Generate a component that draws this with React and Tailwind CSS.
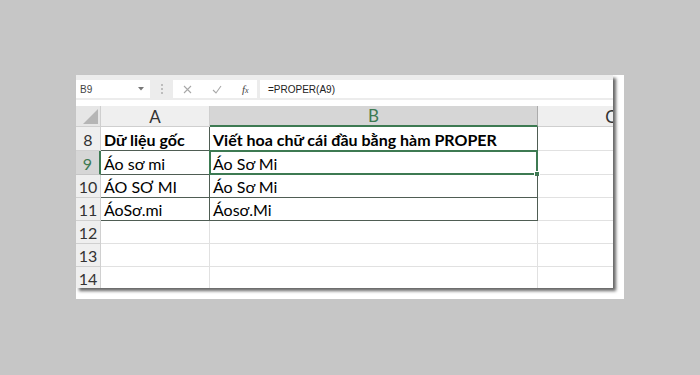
import React from "react";

const rows = [
  { n: 8, h: "h-[24px]", a: "Dữ liệu gốc", b: "Viết hoa chữ cái đầu bằng hàm PROPER", bold: true, inRange: true },
  { n: 9, h: "h-[24px]", a: "Áo sơ mi", b: "Áo Sơ Mi", inRange: true, active: true },
  { n: 10, h: "h-[23px]", a: "ÁO SƠ MI", b: "Áo Sơ Mi", inRange: true },
  { n: 11, h: "h-[23px]", a: "ÁoSơ.mi", b: "Áosơ.Mi", inRange: true },
  { n: 12, h: "h-[23px]" },
  { n: 13, h: "h-[23px]" },
  { n: 14, h: "h-[23px]" },
];

export default function App() {
  return (
    <div className="w-[700px] h-[375px] bg-[#c6c6c6] pt-[75px] pl-[76px] font-['Lato','Open_Sans',sans-serif]">
      <div className="w-[548px] h-[224px] bg-white">
        <div className="w-[537px] h-[213px] overflow-hidden bg-white shadow-[3px_3px_3px_rgba(0,0,0,0.6)]">
          <FormulaBar />
          <div className="h-[6px] bg-white" />
          <HeaderRow />
          {rows.map((row) => <Row key={row.n} row={row} />)}
        </div>
      </div>
    </div>
  );
}

function FormulaBar() {
  return (
    <div className="h-[25px] bg-[#ececec] flex items-start pt-[5px]">
      <div className="w-[74px] h-[18px] bg-white flex items-center justify-between pl-[4px] pr-[6px]">
        <span className="text-[10px] text-[#444] font-['Liberation_Sans',sans-serif]">B9</span>
        <svg width="6" height="4" viewBox="0 0 6 4"><path d="M0 0h6L3 3.5z" fill="#777" /></svg>
      </div>
      <div className="w-[23px] h-[18px] flex flex-col items-center justify-center gap-[2px]">
        <span className="w-[2px] h-[2px] bg-[#bdbdbd]" />
        <span className="w-[2px] h-[2px] bg-[#bdbdbd]" />
        <span className="w-[2px] h-[2px] bg-[#bdbdbd]" />
      </div>
      <div className="w-[84px] h-[18px] bg-white flex items-center pl-[10px] gap-[20px]">
        <svg width="9" height="9" viewBox="0 0 9 9"><path d="M1 1l7 7M8 1l-7 7" stroke="#a8a8a8" strokeWidth="1.1" /></svg>
        <svg width="10" height="9" viewBox="0 0 10 9"><path d="M1 5l3 3 5-7" stroke="#a8a8a8" strokeWidth="1.1" fill="none" /></svg>
        <span className="text-[11px] italic text-[#444] font-['Liberation_Serif',serif] leading-none">f<span className="text-[8px]">x</span></span>
      </div>
      <div className="ml-[3px] flex-1 h-[18px] bg-white flex items-center pl-[8px]">
        <span className="text-[10px] text-[#222] font-['Liberation_Sans',sans-serif]">=PROPER(A9)</span>
      </div>
    </div>
  );
}

function HeaderRow() {
  return (
    <div className="flex h-[21px] text-[17px] leading-none">
      <div className="w-[25px] shrink-0 bg-[#e6e6e6] border-r border-b border-[#cfcfcf] flex items-end justify-end p-[2px]">
        <svg width="15" height="15" viewBox="0 0 15 15"><path d="M15 0V15H0z" fill="#b5b5b5" /></svg>
      </div>
      <div className="w-[109px] shrink-0 bg-[#efefef] border-r border-b border-[#cfcfcf] flex items-center justify-center text-[#333]">A</div>
      <div className="w-[328px] shrink-0 bg-[#d6d6d6] border-r border-[#ababab] border-b-2 border-b-[#3d7a52] flex items-center justify-center text-[#3d7a52]">B</div>
      <div className="w-[146px] shrink-0 bg-[#efefef] border-b border-[#cfcfcf] flex items-center justify-center text-[#333]">C</div>
    </div>
  );
}

function Row({ row }) {
  const text = row.bold ? "font-bold" : "";
  return (
    <div className={`flex ${row.h} text-[16px] leading-none`}>
      <div
        className={
          row.active
            ? "w-[25px] shrink-0 bg-[#d6d6d6] border-r-2 border-r-[#3d7a52] border-b border-b-[#c6c6c6] flex items-end justify-center pb-[2px] text-[#3d7a52]"
            : "w-[25px] shrink-0 bg-[#efefef] border-r border-b border-[#d0d0d0] flex items-end justify-center pb-[2px] text-[#333]"
        }
      >
        {row.n}
      </div>
      <div
        className={
          row.inRange
            ? `w-[109px] shrink-0 border-r border-b border-[#4f5d54] flex items-end pl-[3px] pb-[2px] text-black ${text}`
            : "w-[109px] shrink-0 border-r border-b border-[#e1e1e1]"
        }
      >
        {row.a}
      </div>
      <div
        className={
          row.inRange
            ? `relative w-[328px] shrink-0 border-r border-b border-[#4f5d54] flex items-end pl-[3px] pb-[2px] text-black ${text}`
            : "w-[328px] shrink-0 border-r border-b border-[#e1e1e1]"
        }
      >
        {row.b}
        {row.active && (
          <div className="absolute -left-[1px] -top-[1px] -right-[1px] -bottom-[1px] border-2 border-[#3d7a52]">
            <span className="absolute -right-[4px] -bottom-[4px] w-[6px] h-[6px] bg-[#3d7a52] border border-white" />
          </div>
        )}
      </div>
      <div className="w-[146px] shrink-0 border-b border-[#e1e1e1]" />
    </div>
  );
}
